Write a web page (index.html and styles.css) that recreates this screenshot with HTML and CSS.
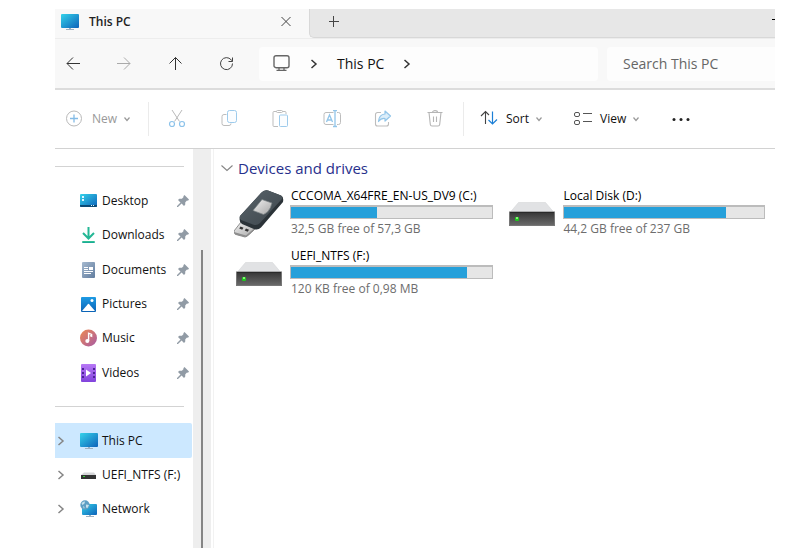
FILE: index.html
```html
<!DOCTYPE html>
<html lang="en">
<head>
<meta charset="utf-8">
<title>This PC</title>
<link rel="stylesheet" href="styles.css">
</head>
<body>
<svg class="defs" aria-hidden="true">
  <defs>
    <linearGradient id="g-screen" x1="0" y1="0" x2="1" y2="1"><stop offset="0" stop-color="#35d3ea"/><stop offset="1" stop-color="#0d62ba"/></linearGradient>
    <linearGradient id="g-down" x1="0" y1="0" x2="0" y2="1"><stop offset="0" stop-color="#3ccb93"/><stop offset="1" stop-color="#109f98"/></linearGradient>
    <linearGradient id="g-doc" x1="0" y1="0" x2="1" y2="1"><stop offset="0" stop-color="#a5b9cf"/><stop offset="1" stop-color="#627d9f"/></linearGradient>
    <linearGradient id="g-pic" x1="0" y1="0" x2="0" y2="1"><stop offset="0" stop-color="#1e9be4"/><stop offset="1" stop-color="#0a62b5"/></linearGradient>
    <linearGradient id="g-music" x1="0" y1="0" x2="1" y2="1"><stop offset="0" stop-color="#ee8a50"/><stop offset="1" stop-color="#a75aa5"/></linearGradient>
    <linearGradient id="g-video" x1="0" y1="0" x2="0" y2="1"><stop offset="0" stop-color="#b778f5"/><stop offset="1" stop-color="#8143dc"/></linearGradient>
    <linearGradient id="g-front" x1="0" y1="0" x2="0" y2="1"><stop offset="0" stop-color="#353535"/><stop offset="1" stop-color="#6a6a6a"/></linearGradient>
    <linearGradient id="g-usb" x1="0" y1="0" x2="1" y2="1"><stop offset="0" stop-color="#59636a"/><stop offset="1" stop-color="#3d464c"/></linearGradient>
    <linearGradient id="g-metal" x1="0" y1="0" x2="1" y2="1"><stop offset="0" stop-color="#f1f1f1"/><stop offset="1" stop-color="#a6a6a6"/></linearGradient>
    <symbol id="i-pc" viewBox="0 0 18 18"><path d="M8 14h2v2h3v1H5v-1h3z" fill="#9fb1c1"/><rect x="0" y="1" width="18" height="14" rx="1" fill="url(#g-screen)"/></symbol>
    <symbol id="i-pin" viewBox="0 0 12 12"><path d="M7.500 0 12 4.500 11 5.800 10 5.500 8.300 7.200 8.200 9.800 7 11 4.600 8.600 1 12 0 12 0 11 3.500 7.500 1 5 2.300 3.800 4.900 3.800 6.600 2.100 6.300 1.200Z" fill="#919ba5"/></symbol>
    <symbol id="i-right" viewBox="0 0 10 10"><path d="M2.500 1 7 5 2.500 9" fill="none" stroke="currentColor" stroke-width="1.500"/></symbol>
    <symbol id="i-chev" viewBox="0 0 8 8"><path d="M1.500 2.500 4 5.500 6.500 2.500" fill="none" stroke="currentColor" stroke-width="1.200"/></symbol>
    <symbol id="i-drive" viewBox="0 0 46 24"><path d="M9.500.5h27l8 9.500h-43z" fill="#e1e2e4" stroke="#d5d6d9" stroke-width=".6"/><rect x=".5" y="10" width="45" height="13.500" fill="url(#g-front)" stroke="#777" stroke-width="1"/><path d="M1 10.500h44" stroke="#292929"/><rect x="6" y="15" width="4" height="4" rx="1" fill="#1fc51f"/><rect x="7" y="15" width="2" height="2" fill="#86f276"/></symbol>
  </defs>
</svg>

<div class="window">
  <header class="tabs">
    <div class="tab">
      <svg class="i18"><use href="#i-pc"/></svg>
      <span class="tab-title">This PC</span>
      <button class="plain" aria-label="Close tab"><svg class="i12" viewBox="0 0 12 12"><path d="M1.500 1 10.500 10M10.500 1 1.500 10" fill="none" stroke="#444"/></svg></button>
    </div>
    <div class="strip">
      <button class="plain" aria-label="New tab"><svg class="i12" viewBox="0 0 12 12"><path d="M1 6.500h10M5.500 1v11" stroke="#444" fill="none"/></svg></button>
      <button class="plain minimize" aria-label="Minimize"></button>
    </div>
  </header>

  <nav class="nav" aria-label="Navigation">
    <div class="arrows">
      <button class="plain" aria-label="Back"><svg class="i16" viewBox="0 0 16 16"><path d="M15 7.500H2M8 1.500l-6 6 6 6" fill="none" stroke="#333"/></svg></button>
      <button class="plain" aria-label="Forward"><svg class="i16" viewBox="0 0 16 16"><path d="M1 7.500h13M8 1.500l6 6-6 6" fill="none" stroke="#aaa"/></svg></button>
      <button class="plain" aria-label="Up"><svg class="i16" viewBox="0 0 16 16"><path d="M8.500 14V1.500M2.500 7.500l6-6 6 6" fill="none" stroke="#333"/></svg></button>
      <button class="plain" aria-label="Refresh"><svg class="i16" viewBox="0 0 16 16"><path d="M14.500 7.500A6 6 0 1 1 13.200 3.900L14.500 5M14.500 1.500V5.500h-4" fill="none" stroke="#444"/></svg></button>
    </div>
    <div class="address">
      <svg class="i18" viewBox="0 0 18 18"><rect x="1" y=".7" width="15" height="12" rx="2" fill="none" stroke="#666" stroke-width="1.400"/><path d="M6 13v2M11 13v2M3.500 15.300h10" fill="none" stroke="#666" stroke-width="1.300"/></svg>
      <svg class="i10"><use href="#i-right"/></svg>
      <a href="#" class="crumb">This PC</a>
      <svg class="i10"><use href="#i-right"/></svg>
    </div>
    <input class="search" type="text" aria-label="Search" placeholder="Search This PC">
  </nav>

  <div class="toolbar">
    <button class="plain new" disabled><svg class="i18" viewBox="0 0 18 18"><circle cx="9" cy="8.500" r="7.500" fill="none" stroke="#b9b9b9"/><path d="M5 8.500h8M9 4.500v8" stroke="#83bbe6" stroke-width="1.300"/></svg><span>New</span><svg class="i8"><use href="#i-chev"/></svg></button>
    <div class="group">
      <button class="plain" disabled aria-label="Cut"><svg class="i18" viewBox="0 0 18 18"><path d="M4 0l7.500 11.500M14 0 6.500 11.500" fill="none" stroke="#b9b9b9"/><circle cx="4" cy="14" r="2.500" fill="none" stroke="#8dc3ea" stroke-width="1.200"/><circle cx="14" cy="14" r="2.500" fill="none" stroke="#8dc3ea" stroke-width="1.200"/></svg></button>
      <button class="plain" disabled aria-label="Copy"><svg class="i18" viewBox="0 0 18 18"><path d="M6.500 4.500H4a2 2 0 0 0-2 2v7a2 2 0 0 0 2 2h5a2 2 0 0 0 2-2" fill="none" stroke="#bdbdbd"/><rect x="7.500" y=".5" width="9" height="12" rx="2" fill="#fbfdff" stroke="#9dcbec"/></svg></button>
      <button class="plain" disabled aria-label="Paste"><svg class="i18" viewBox="0 0 18 18"><path d="M6 1.500H3a1 1 0 0 0-1 1v13a1 1 0 0 0 1 1h4M11 1.500h3a1 1 0 0 1 1 1V4" fill="none" stroke="#bdbdbd"/><rect x="5.500" y=".5" width="6" height="2" rx="1" fill="#fff" stroke="#bdbdbd"/><rect x="8.500" y="5" width="8" height="11.500" rx="1" fill="#fbfdff" stroke="#9dcbec"/></svg></button>
      <button class="plain" disabled aria-label="Rename"><svg class="i18" viewBox="0 0 18 18"><path d="M10.500 2.500H3a2 2 0 0 0-2 2v8a2 2 0 0 0 2 2h7.500M14 2.500h1.500a2 2 0 0 1 2 2v8a2 2 0 0 1-2 2H14" fill="none" stroke="#bdbdbd"/><path d="M3.500 12 6.500 5l3 7M4.500 10h4M12 1v15.500M10 .5h4M10 16.500h4" fill="none" stroke="#92c5e9" stroke-width="1.300"/></svg></button>
      <button class="plain" disabled aria-label="Share"><svg class="i18" viewBox="0 0 18 18"><path d="M7 2.500H3.500a2 2 0 0 0-2 2v9.500a2 2 0 0 0 2 2h9a2 2 0 0 0 2-2v-2" fill="none" stroke="#bdbdbd" stroke-width="1.100"/><path d="M11 1 16.500 6 11 11V8.500Q7 8 4.500 11.500 5 4.500 11 4Z" fill="#dceefa" stroke="#92c5e9" stroke-width="1.200" stroke-linejoin="round"/></svg></button>
      <button class="plain" disabled aria-label="Delete"><svg class="i18" viewBox="0 0 18 18"><path d="M1.500 2.500h15M6.500 2.500c0-2.500 5-2.500 5 0M3 2.500 4.300 14.500q.2 1.500 1.700 1.500h6q1.500 0 1.700-1.500L15 2.500M7.500 6.500v5.500M10.500 6.500v5.500" fill="none" stroke="#b5b5b5" stroke-width="1.100"/></svg></button>
    </div>
    <button class="plain menu"><svg class="i18" viewBox="0 0 18 18"><path d="M5.500 14V1.500M1 6l4.500-4.500L9 5" fill="none" stroke="#444" stroke-width="1.100"/><path d="M12.500 1.500v12.500M8.500 10l4 4 4.500-4.500" fill="none" stroke="#1c7fd6" stroke-width="1.200"/></svg><span>Sort</span><svg class="i8"><use href="#i-chev"/></svg></button>
    <button class="plain menu"><svg class="i18" viewBox="0 0 18 18"><rect x=".5" y="2.500" width="5" height="4" rx="1.500" fill="none" stroke="#555"/><rect x=".5" y="10.500" width="5" height="4" rx="1.500" fill="none" stroke="#555"/><path d="M9 3.500h9M9 11.500h9" stroke="#555"/></svg><span>View</span><svg class="i8"><use href="#i-chev"/></svg></button>
    <button class="plain more" aria-label="See more"><svg class="i18" viewBox="0 0 18 18"><g fill="#222"><circle cx="2" cy="9.500" r="1.500"/><circle cx="9" cy="9.500" r="1.500"/><circle cx="16" cy="9.500" r="1.500"/></g></svg></button>
  </div>

  <div class="body">
    <aside class="side">
      <ul class="places pinned">
        <li><a href="#"><svg class="i18" viewBox="0 0 18 18"><rect y="2" width="17" height="13" rx="1" fill="url(#g-screen)"/><path d="M0 13h17v1a1 1 0 0 1-1 1H1a1 1 0 0 1-1-1z" fill="#0b4a75"/><path d="M2 4h2v2H2zM2 7h2v2H2zM11 13h1v1h-1zM13 13h1v1h-1z" fill="#dff6ff"/></svg><span>Desktop</span><svg class="i12"><use href="#i-pin"/></svg></a></li>
        <li><a href="#"><svg class="i18" viewBox="0 0 18 18"><path d="M8.500 1v11M3 7l5.500 5.500L14 7" fill="none" stroke="#24b795" stroke-width="2"/><rect x="2" y="15" width="13" height="2" rx="1" fill="url(#g-down)"/></svg><span>Downloads</span><svg class="i12"><use href="#i-pin"/></svg></a></li>
        <li><a href="#"><svg class="i18" viewBox="0 0 18 18"><rect x="2" y="1" width="13" height="16" rx="1" fill="url(#g-doc)"/><path d="M4 6h4v1H4zM4 8h4v1H4zM4 10h9v1H4zM4 12h7v1H4zM9 6h4v3H9z" fill="#fff"/></svg><span>Documents</span><svg class="i12"><use href="#i-pin"/></svg></a></li>
        <li><a href="#"><svg class="i18" viewBox="0 0 18 18"><rect x="1" y="2" width="15" height="15" rx="1" fill="url(#g-pic)"/><path d="M2 16 8 9q.5-.5 1 0l6 7z" fill="#fff"/><circle cx="12" cy="5.500" r="1.500" fill="#fff"/></svg><span>Pictures</span><svg class="i12"><use href="#i-pin"/></svg></a></li>
        <li><a href="#"><svg class="i18" viewBox="0 0 18 18"><circle cx="8.500" cy="9" r="8.500" fill="url(#g-music)"/><circle cx="7.300" cy="12" r="2" fill="#fff"/><path d="M8.600 12V4.200l3 1.200v1.800l-1.500-.6" fill="none" stroke="#fff" stroke-width="1.400"/></svg><span>Music</span><svg class="i12"><use href="#i-pin"/></svg></a></li>
        <li><a href="#"><svg class="i18" viewBox="0 0 18 18"><rect x="1" y="0" width="15" height="18" rx="1" fill="url(#g-video)"/><path d="M2 4h2v2H2zM2 8h2v2H2zM2 12h2v2H2zM13 4h2v2h-2zM13 8h2v2h-2zM13 12h2v2h-2z" fill="#4c2494"/><path d="M6 5.500v7l5-3.500z" fill="#fff"/></svg><span>Videos</span><svg class="i12"><use href="#i-pin"/></svg></a></li>
      </ul>
      <ul class="places roots">
        <li><a href="#" class="active"><svg class="i10"><use href="#i-right"/></svg><svg class="i18"><use href="#i-pc"/></svg><span>This PC</span></a></li>
        <li><a href="#"><svg class="i10"><use href="#i-right"/></svg><svg class="i18" viewBox="0 0 18 18"><path d="M4 6.500h10l2 2.500H1z" fill="#d5d6d8"/><rect x="1" y="9" width="15" height="4" fill="#333"/><rect x="3" y="10" width="2" height="1" fill="#35d035"/></svg><span>UEFI_NTFS (F:)</span></a></li>
        <li><a href="#"><svg class="i10"><use href="#i-right"/></svg><svg class="i18" viewBox="0 0 18 18"><path d="M9 15h2v1h3v1H6v-1h3z" fill="#9fb1c1"/><rect x="2" y="4" width="15" height="11" rx="1" fill="url(#g-screen)"/><circle cx="5" cy="5" r="4.700" fill="#5e9fc4"/><path d="M1.500 3.500Q3 1 5 1.500L4.500 3.500 2.500 5zM6 4.500l3 .5-1.500 3-1.500-.5zM3 6l1.500 1L4 9z" fill="#c7e2ed"/></svg><span>Network</span></a></li>
      </ul>
    </aside>
    <div class="scroll"><div class="thumb"></div></div>

    <main class="content">
      <h2><svg class="i12" viewBox="0 0 12 12"><path d="M.5 3.500 6 8.500 11.500 3.500" fill="none" stroke="#858585" stroke-width="1.100"/></svg><span>Devices and drives</span></h2>
      <div class="drives">
        <article class="drive">
          <svg class="pic usb" viewBox="0 0 50 49"><path d="M7 33 0 42Q0 45 2 45.500L11 48Q13 48 21 40Z" fill="url(#g-metal)" stroke="#777" stroke-width=".8"/><path d="M0 43 12 46.500 20 39.500V41L12.500 48 1 45.500Z" fill="#8d8d8d"/><path d="M6.500 37.500l3 1.200-1.300 2-3-1.200zM12 39.500l3 1.200-1.300 2-3-1.200z" fill="#333"/><path d="M6 27 27 4Q30 .5 34 1.500L47 6.500Q50 8 49 13L27 38.500Q24 41.500 20 40L8 35Q4.500 33 6 27Z" fill="#2b3338"/><path d="M6 27 27 4Q30 .5 34 1.500L47 6.500Q49.500 8 47.500 10.500L26 34Q23 37 19 35.500L7 31Q5 29 6 27Z" fill="url(#g-usb)"/><path d="M28 10.500 38 14 36.500 18.500Q34 24 29.500 25.500L19 21.500Z" fill="url(#g-metal)" stroke="#747c80" stroke-width=".7"/></svg>
          <div class="info"><h3>CCCOMA_X64FRE_EN-US_DV9 (C:)</h3><div class="bar"><div class="fill" style="width:43%"></div></div><p>32,5 GB free of 57,3 GB</p></div>
        </article>
        <article class="drive">
          <svg class="pic"><use href="#i-drive"/></svg>
          <div class="info"><h3>Local Disk (D:)</h3><div class="bar"><div class="fill" style="width:81%"></div></div><p>44,2 GB free of 237 GB</p></div>
        </article>
        <article class="drive">
          <svg class="pic"><use href="#i-drive"/></svg>
          <div class="info"><h3>UEFI_NTFS (F:)</h3><div class="bar"><div class="fill" style="width:88%"></div></div><p>120 KB free of 0,98 MB</p></div>
        </article>
      </div>
    </main>
  </div>
</div>
</body>
</html>
```
FILE: styles.css
```css
* { box-sizing: border-box; }
body {
  margin: 0;
  padding: 9px 33px 1px 55px;
  background: #fff;
  color: #111;
  font: 12px/16px "Open Sans", "Noto Sans", sans-serif;
}
.defs { position: absolute; width: 0; height: 0; }
.window { display: flex; flex-direction: column; min-height: calc(100vh - 10px); overflow: hidden; }
svg { display: block; flex: none; }
.i8 { width: 8px; height: 8px; color: #999; }
.i10 { width: 10px; height: 10px; }
.i12 { width: 12px; height: 12px; }
.i16 { width: 16px; height: 16px; }
.i18 { width: 18px; height: 18px; }
a { color: inherit; text-decoration: none; }
ul { list-style: none; margin: 0; padding: 0; }
h2, h3, p { margin: 0; font-weight: 400; }
.plain {
  display: flex;
  align-items: center;
  justify-content: center;
  padding: 0;
  border: 0;
  background: none;
  color: inherit;
  font: inherit;
}

.tabs { display: flex; height: 30px; background: #f8f8f8; border-bottom: 1px solid #ededed; }
.tab { display: flex; align-items: center; width: 254px; padding: 0 17px 4px 6px; }
.tab-title { flex: 1; margin-left: 10px; font-weight: 600; color: #222; }
.strip {
  flex: 1;
  display: flex;
  align-items: center;
  justify-content: space-between;
  height: 29px;
  padding: 0 0 4px 18px;
  background: #e7e7e7;
  border: solid #d8d8d8;
  border-width: 0 0 1px 1px;
  border-bottom-left-radius: 5px;
}
.minimize { width: 3px; height: 1px; margin-bottom: 4px; background: #000; }

.nav { display: flex; align-items: center; height: 51px; background: #f8f8f8; border-bottom: 2px solid #dcdcdc; }
.arrows { display: flex; gap: 35px; width: 204px; padding-left: 10px; }
.address {
  flex: 1;
  display: flex;
  align-items: center;
  height: 34px;
  padding-left: 14px;
  border-radius: 4px;
  background: #fdfdfd;
  font-size: 14px;
}
.address .i10 { margin: 0 18px; color: #333; }
.search {
  width: 168px;
  height: 34px;
  margin-left: 9px;
  padding: 0 0 0 16px;
  border: 0;
  border-radius: 4px 0 0 4px;
  background: #fdfdfd;
  font: 14px "Open Sans", "Noto Sans", sans-serif;
}
.search::placeholder { color: #666; opacity: 1; }

.toolbar { display: flex; align-items: center; height: 59px; border-bottom: 1px solid #d2d2d2; }
.new { width: 93px; height: 34px; padding-left: 10px; justify-content: flex-start; color: #999; }
.new span { margin: 0 6px 0 9px; }
.group {
  display: flex;
  justify-content: space-between;
  width: 316px;
  padding: 0 10px;
  border: solid #ebebeb;
  border-width: 0 1px;
}
.group .plain { width: 36px; height: 34px; }
.menu { width: 94px; height: 34px; padding-left: 16px; justify-content: flex-start; }
.menu span { margin: 0 6px 0 8px; }
.more { margin-left: 20px; }

.body { display: flex; flex: 1; }
.side { width: 138px; padding-top: 17px; }
.pinned { display: grid; height: 241px; margin-right: 9px; padding: 17px 0 16px; border: solid #d3d3d3; border-width: 1px 0; }
.places a { display: flex; align-items: center; height: 100%; }
.places span { margin-left: 4px; white-space: nowrap; }
.pinned a { padding-left: 25px; }
.pinned .i12 { margin-left: auto; margin-right: -5px; }
.roots { padding-top: 16px; margin-right: 1px; }
.roots li { height: 34px; }
.roots li:first-child { height: 35px; }
.roots .i10 { margin: 0 14px 0 1px; color: #858585; }
.active { background: #cce8ff; border-radius: 0 2px 2px 0; }
.scroll { display: flex; justify-content: center; width: 18px; background: #eee; }
.thumb { width: 2px; margin-top: 101px; background: #858585; }
.content { flex: 1; margin-left: 2px; padding: 9px 10px 0 7px; border-left: 1px solid #f2f2f2; }
.content h2 { display: flex; align-items: center; gap: 5px; font-size: 15px; line-height: 20px; color: #27308c; }
.drives { display: grid; grid-template-columns: repeat(2, minmax(0, 1fr)); column-gap: 16px; row-gap: 4px; margin: 9px 0 0 15px; }
.drive { display: flex; gap: 8px; }
.pic { width: 46px; height: 24px; margin-top: 15px; }
.usb { width: 50px; height: 49px; margin: 2px -2px 0; }
.info { flex: 1; min-width: 0; }
.info h3 { padding-left: 1px; font-size: 12px; line-height: 18px; white-space: nowrap; color: #000; }
.bar { height: 14px; border: 1px solid #bcbcbc; border-top-width: 2px; background: #e6e6e6; }
.fill { height: 100%; background: #26a0da; }
.info p { padding-left: 1px; line-height: 20px; margin-bottom: 4px; color: #6d6d6d; white-space: nowrap; }
```
